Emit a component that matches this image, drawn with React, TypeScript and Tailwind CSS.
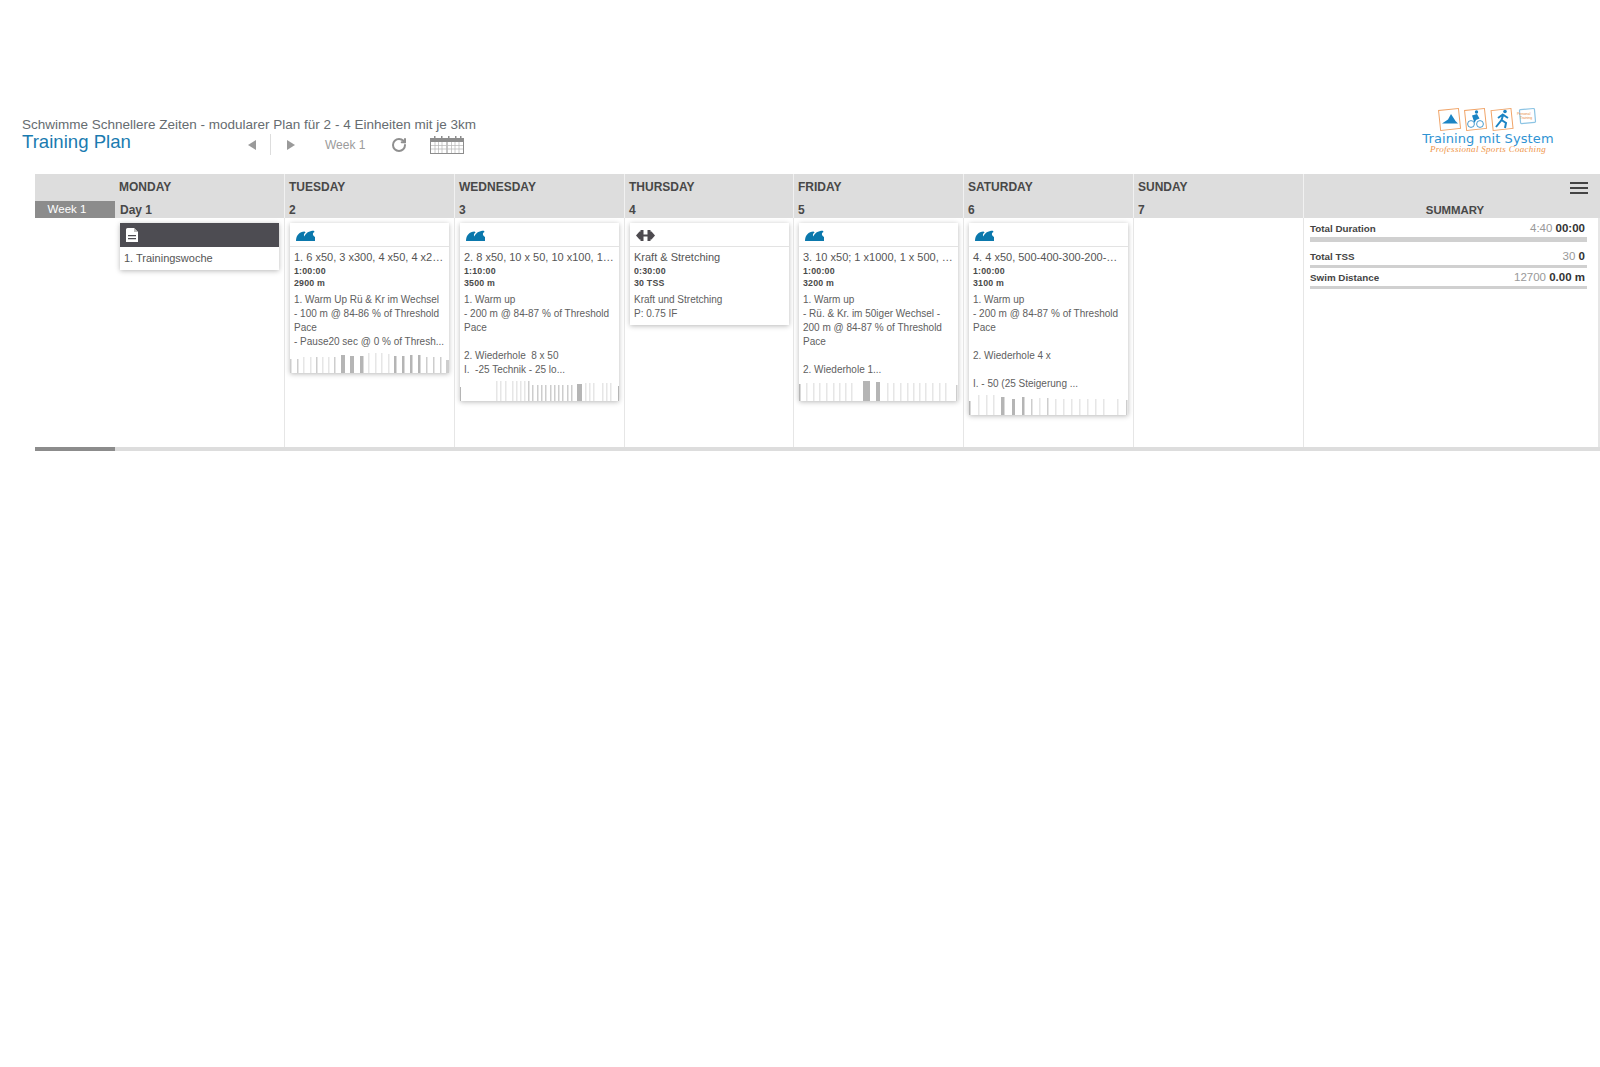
import { ReactNode } from 'react';
import { RotateCw } from 'lucide-react';

type Bar = [number, number, number, string];

const D = '#b5b5b5';
const M = '#cdcdcd';
const L = '#e6e6e6';

const thin = (xs: number[], h: number, c: string): Bar[] => xs.map((x) => [x, 1.5, h, c]);

const tuesdayBars: Bar[] = [
  [0, 1.5, 14, M], [7, 1.5, 14, M], [13, 1.5, 16, L], [20, 1.5, 16, L], [26, 1.5, 16, M], [32, 1.5, 16, L],
  [38, 1.5, 16, L], [44, 1.5, 16, M], [51, 4, 18, D], [60, 4, 17, D], [70, 3.5, 17, D],
  [78, 1.5, 20, L], [85, 1.5, 20, L], [91, 1.5, 20, L], [98, 1.5, 19, L], [104, 2.5, 17, D], [112, 2.5, 17, D],
  [120, 2.5, 18, D], [128, 2.5, 18, D], [136, 1.5, 16, M], [143, 1.5, 16, M], [150, 1.5, 16, M], [156, 3, 13, M],
];

const wednesdayBars: Bar[] = [
  [0, 1, 14, D],
  ...thin([36, 40, 45], 20, L),
  ...thin([52, 56, 60, 64], 20, L),
  [68, 1.5, 20, M],
  ...thin([72, 77, 81, 85, 90, 94, 98, 102, 107, 111], 16, M),
  [117, 5, 17, D],
  ...thin([125, 129, 133], 18, L),
  ...thin([142, 146, 150], 18, L),
  [158, 1, 15, D],
];

const fridayBars: Bar[] = [
  [0, 1.5, 17, D],
  ...thin([7, 14, 20, 27, 34, 40, 46, 52], 18, L),
  [64, 7, 20, D], [77, 4, 19, D],
  ...thin([88, 94, 101, 108, 114, 120, 126, 133, 140, 146], 18, L),
  [157, 1.5, 16, M],
];

const saturdayBars: Bar[] = [
  [0, 1.5, 14, D],
  ...thin([9, 17, 24], 20, L),
  [32, 3.5, 18, D], [43, 3, 16, D], [53, 2.5, 18, D],
  [62, 1.5, 16, M], [70, 1.5, 17, L], [78, 1.5, 17, M],
  ...thin([86, 94, 102, 110, 118, 126, 134, 148], 16, L),
  [157, 1.5, 15, M],
];

function Swim() {
  return (
    <svg width="19" height="11" viewBox="0 0 19 11" fill="#0b78ac">
      <path d="M0 11C0 5.5 3.5 1.6 8.6 1.6L9.6 2.8C8 3.4 7.4 5 8.4 6.6 9.6 3 13 .8 17.8.8L18.6 2C16.6 2.6 16 5 19 7V11Z" />
    </svg>
  );
}

function Dumbbell() {
  return (
    <svg width="19" height="11" viewBox="0 0 19 11" fill="#4d4a4f">
      <path d="M0 5.5 3.5 1.5H6v8H3.5ZM19 5.5 15.5 1.5H13v8h2.5ZM5.5 4.4h8v2.2h-8Z" />
      <path d="M4.5 0h3v11h-3ZM11.5 0h3v11h-3Z" />
    </svg>
  );
}

function Note() {
  return (
    <svg width="12" height="14" viewBox="0 0 12 14">
      <path d="M0 1.5A1.5 1.5 0 0 1 1.5 0H8l4 4v10H0Z" fill="#fff" />
      <path d="M8 0v4h4Z" fill="#bdbdbd" />
      <path d="M2 7h8v1.2H2ZM2 10h8v1.2H2Z" fill="#4d4c52" />
    </svg>
  );
}

function CalendarGrid() {
  return (
    <svg width="34" height="19" viewBox="0 0 34 19">
      <path d="M0 3h34v16H0Z" fill="#8d8d8d" />
      <path d="M4 1h1.5v3H4ZM11 1h1.5v3H11ZM18 1h1.5v3H18ZM25 1h1.5v3H25ZM30 1h1.5v3H30Z" fill="#8d8d8d" />
      <path d="M1 7h15.5v11H1ZM17.5 7H33v11H17.5Z" fill="#fff" />
      <path d="M1 10.5h15.5M1 14h15.5M17.5 10.5H33M17.5 14H33M5 7v11M8.5 7v11M12 7v11M21.5 7v11M25 7v11M29 7v11" stroke="#b5b5b5" strokeWidth="0.7" />
    </svg>
  );
}

function Logo() {
  return (
    <div className="mr-[42px] mt-[-8px] flex w-[140px] flex-col items-center">
      <svg width="100" height="26" viewBox="0 0 100 26">
        <g fill="#fff" stroke="#f0a468" strokeWidth="1">
          <rect x="1.5" y="2.5" width="20" height="20" transform="rotate(-6 11 12)" />
          <rect x="27.5" y="2.5" width="20" height="20" transform="rotate(-6 37 12)" />
          <rect x="54" y="2.5" width="20" height="20" transform="rotate(-6 64 12)" />
        </g>
        <rect x="82" y="2" width="15" height="14" rx="1" transform="rotate(-5 90 9)" fill="#fff" stroke="#8cc4e4" strokeWidth="1.2" />
        <path d="M4 16.5 10 12.5 13 7 17.5 14 20 16.5Z" fill="#1b84c4" />
        <circle cx="38.5" cy="5" r="1.7" fill="#1b84c4" />
        <path d="M34 8.5 39 7 41.5 11.5 38 13 36.5 16Z" fill="#1b84c4" />
        <circle cx="33" cy="17" r="3.4" fill="none" stroke="#1b84c4" strokeWidth="0.8" />
        <circle cx="42" cy="17" r="3.4" fill="none" stroke="#1b84c4" strokeWidth="0.8" />
        <circle cx="67" cy="4.5" r="1.8" fill="#1b84c4" />
        <path d="M65.5 7 60 11M65.5 7 63.5 13 58 20M63.5 13 68 16 67 21M65.5 8 70 11" fill="none" stroke="#1b84c4" strokeWidth="2" />
        <text x="79" y="8" fontSize="3.4" fill="#e98b3c" fontFamily="Liberation Sans, sans-serif">Personal</text>
        <text x="82" y="12" fontSize="3.4" fill="#e98b3c" fontFamily="Liberation Sans, sans-serif">Training</text>
      </svg>
      <div className="text-[13px] leading-[12px] tracking-[0.1px] text-[#2f93d3] font-['DejaVu_Sans',sans-serif] whitespace-nowrap">Training mit System</div>
      <div className="text-[9px] italic leading-[9px] tracking-[0.3px] text-[#ef9549] font-['Liberation_Serif',serif] whitespace-nowrap">Professional Sports Coaching</div>
    </div>
  );
}

function Card({ icon, children, bars, dark }: { icon: ReactNode; children: ReactNode; bars?: Bar[]; dark?: boolean }) {
  return (
    <div className="bg-white shadow-[0_1px_5px_rgba(0,0,0,0.28)]">
      <div className={`flex h-[24px] items-center pl-[6px] ${dark ? 'bg-[#4d4c52]' : 'border-b border-[#e3e3e3] pt-[2px]'}`}>{icon}</div>
      {children}
      {bars && (
        <svg width="159" height="20" viewBox="0 0 159 20" className="block">
          {bars.map(([x, w, h, c]) => (
            <rect key={x} x={x} y={20 - h} width={w} height={h} fill={c} />
          ))}
        </svg>
      )}
    </div>
  );
}

function Workout({ title, meta, lines, bars, icon }: { title: string; meta: string[]; lines: string[]; bars?: Bar[]; icon: ReactNode }) {
  return (
    <Card icon={icon} bars={bars}>
      <div className="px-[4px] pt-[3px] pb-[4px]">
        <div className="whitespace-nowrap text-[11px] leading-[14px] text-[#555]">{title}</div>
        <div className="pt-[1px] text-[8.8px] font-bold leading-[12px] tracking-[0.2px] text-[#4a4a4a]">
          {meta.map((m) => (
            <div key={m}>{m}</div>
          ))}
        </div>
        <div className="pt-[4px] text-[10px] leading-[14px] text-[#606060]">
          {lines.map((l, i) => (
            <div key={i} className="h-[14px] whitespace-pre">{l}</div>
          ))}
        </div>
      </div>
    </Card>
  );
}

const days = [
  { name: 'MONDAY', num: 'Day 1', w: 'w-[169px]' },
  { name: 'TUESDAY', num: '2', w: 'w-[170px]' },
  { name: 'WEDNESDAY', num: '3', w: 'w-[170px]' },
  { name: 'THURSDAY', num: '4', w: 'w-[169px]' },
  { name: 'FRIDAY', num: '5', w: 'w-[170px]' },
  { name: 'SATURDAY', num: '6', w: 'w-[170px]' },
  { name: 'SUNDAY', num: '7', w: 'w-[170px]' },
];

const summary = [
  { label: 'Total Duration', a: '4:40', b: '00:00', cls: '', bar: 'h-[5px]' },
  { label: 'Total TSS', a: '30', b: '0', cls: 'mt-[7px]', bar: 'h-[3px]' },
  { label: 'Swim Distance', a: '12700', b: '0.00 m', cls: 'mt-[2px]', bar: 'h-[3px]' },
];

export default function App() {
  const columns: ReactNode[] = [
    <Card key="mon" dark icon={<Note />}>
      <div className="px-[4px] pb-[5px] pt-[4px] text-[11px] leading-[14px] text-[#555]">1. Trainingswoche</div>
    </Card>,
    <Workout
      key="tue"
      icon={<Swim />}
      title="1. 6 x50, 3 x300, 4 x50, 4 x2…"
      meta={['1:00:00', '2900 m']}
      lines={['1. Warm Up Rü & Kr im Wechsel', '- 100 m @ 84-86 % of Threshold', 'Pace', '- Pause20 sec @ 0 % of Thresh...']}
      bars={tuesdayBars}
    />,
    <Workout
      key="wed"
      icon={<Swim />}
      title="2. 8 x50, 10 x 50, 10 x100, 1…"
      meta={['1:10:00', '3500 m']}
      lines={['1. Warm up', '- 200 m @ 84-87 % of Threshold', 'Pace', '', '2. Wiederhole  8 x 50', 'I.  -25 Technik - 25 lo...']}
      bars={wednesdayBars}
    />,
    <Workout
      key="thu"
      icon={<Dumbbell />}
      title="Kraft & Stretching"
      meta={['0:30:00', '30 TSS']}
      lines={['Kraft und Stretching', 'P: 0.75 IF']}
    />,
    <Workout
      key="fri"
      icon={<Swim />}
      title="3. 10 x50; 1 x1000, 1 x 500, …"
      meta={['1:00:00', '3200 m']}
      lines={['1. Warm up', '- Rü. & Kr. im 50iger Wechsel -', '200 m @ 84-87 % of Threshold', 'Pace', '', '2. Wiederhole 1...']}
      bars={fridayBars}
    />,
    <Workout
      key="sat"
      icon={<Swim />}
      title="4. 4 x50, 500-400-300-200-…"
      meta={['1:00:00', '3100 m']}
      lines={['1. Warm up', '- 200 m @ 84-87 % of Threshold', 'Pace', '', '2. Wiederhole 4 x', '', 'I. - 50 (25 Steigerung ...']}
      bars={saturdayBars}
    />,
    null,
  ];

  return (
    <div className="min-h-[1067px] bg-white font-['Liberation_Sans',Arial,sans-serif]">
      {/* Title bar */}
      <div className="flex h-[174px] items-start justify-between pt-[116px] pl-[22px]">
        <div>
          <div className="text-[13.5px] leading-[18px] text-[#666c70]">Schwimme Schnellere Zeiten - modularer Plan für 2 - 4 Einheiten mit je 3km</div>
          <div className="flex items-center">
            <div className="mt-[-6px] w-[226px] text-[18.6px] leading-[20px] text-[#1a7bb0]">Training Plan</div>
            <div className="h-0 w-0 border-y-[5px] border-r-[8px] border-y-transparent border-r-[#9a9a9a]" />
            <div className="ml-[14px] h-[21px] w-px bg-[#ddd]" />
            <div className="ml-[16px] h-0 w-0 border-y-[5px] border-l-[8px] border-y-transparent border-l-[#9a9a9a]" />
            <div className="ml-[30px] text-[12px] text-[#9b9b9b]">Week 1</div>
            <RotateCw className="ml-[26px] mt-[1px] h-[16px] w-[16px] text-[#8f8f8f]" strokeWidth={3} />
            <div className="ml-[23px]"><CalendarGrid /></div>
          </div>
        </div>
        <div className="mt-[-1px]"><Logo /></div>
      </div>

      {/* Calendar */}
      <div className="ml-[35px]">
        <div className="flex h-[44px] bg-[#dddddd]">
          <div className="flex w-[80px] flex-col justify-end">
            <div className="flex h-[17px] items-center justify-center bg-[#8c8c8c] pr-[16px] text-[11.5px] text-white">Week 1</div>
          </div>
          {days.map((d, i) => (
            <div key={d.name} className={`${d.w} flex flex-col border-white/60 pl-[4px] ${i > 0 ? 'border-l' : ''}`}>
              <div className="flex h-[28px] items-end pb-[8px] text-[12px] font-bold leading-[14px] text-[#484848]">{d.name}</div>
              <div className={`text-[12px] font-bold leading-[16px] text-[#484848] ${i === 0 ? 'pl-[1px]' : ''}`}>{d.num}</div>
            </div>
          ))}
          <div className="flex w-[297px] flex-col border-l border-white/60">
            <div className="flex h-[28px] items-center justify-end pr-[12px]">
              <div className="flex w-[18px] flex-col gap-[3px]">
                <div className="h-[2px] bg-[#444]" />
                <div className="h-[2px] bg-[#444]" />
                <div className="h-[2px] bg-[#444]" />
              </div>
            </div>
            <div className="pl-[6px] text-center text-[11.4px] font-bold leading-[16px] text-[#484848]">SUMMARY</div>
          </div>
        </div>

        <div className="flex h-[229px]">
          <div className="w-[80px]" />
          {days.map((d, i) => (
            <div key={d.name} className={`${d.w} ${i > 0 ? 'border-l border-[#e6e6e6]' : ''} pl-[5px] pt-[5px]`}>
              <div className="w-[159px]">{columns[i]}</div>
            </div>
          ))}
          <div className="w-[297px] border-l border-r-2 border-[#e6e6e6] pl-[6px] pr-[11px] pt-[3px]">
            {summary.map((s) => (
              <div key={s.label} className={s.cls}>
                <div className="flex h-[16px] items-center justify-between">
                  <span className="text-[9.8px] font-bold text-[#444]">{s.label}</span>
                  <span className="pr-[2px] text-[11.5px] text-[#999]">
                    {s.a} <b className="text-[#333]">{s.b}</b>
                  </span>
                </div>
                <div className={`${s.bar} bg-[#d0d0d0]`} />
              </div>
            ))}
          </div>
        </div>

        <div className="h-[4px] bg-[#dddddd]">
          <div className="h-[4px] w-[80px] bg-[#8c8c8c]" />
        </div>
      </div>
    </div>
  );
}
